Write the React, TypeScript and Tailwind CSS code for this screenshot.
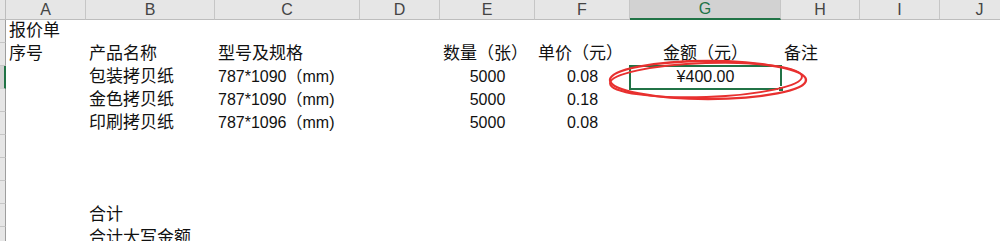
import React from "react"

const cols = [
  { l: "A", w: 80 },
  { l: "B", w: 129 },
  { l: "C", w: 145 },
  { l: "D", w: 80 },
  { l: "E", w: 95 },
  { l: "F", w: 95 },
  { l: "G", w: 151 },
  { l: "H", w: 79 },
  { l: "I", w: 80 },
  { l: "J", w: 80 },
]

type Cell = { t: string; align?: "left" | "center"; cjk?: boolean }

// row -> column index -> cell
const rows: Record<number, Cell>[] = [
  { 0: { t: "报价单", cjk: true } },
  {
    0: { t: "序号", cjk: true },
    1: { t: "产品名称", cjk: true },
    2: { t: "型号及规格", cjk: true },
    4: { t: "数量（张）", cjk: true },
    5: { t: "单价（元）", cjk: true },
    6: { t: "金额（元）", cjk: true, align: "center" },
    7: { t: "备注", cjk: true },
  },
  {
    1: { t: "包装拷贝纸", cjk: true },
    2: { t: "787*1090（mm)" },
    4: { t: "5000", align: "center" },
    5: { t: "0.08", align: "center" },
    6: { t: "¥400.00", align: "center" },
  },
  {
    1: { t: "金色拷贝纸", cjk: true },
    2: { t: "787*1090（mm)" },
    4: { t: "5000", align: "center" },
    5: { t: "0.18", align: "center" },
  },
  {
    1: { t: "印刷拷贝纸", cjk: true },
    2: { t: "787*1096（mm)" },
    4: { t: "5000", align: "center" },
    5: { t: "0.08", align: "center" },
  },
  {},
  {},
  {},
  { 1: { t: "合计", cjk: true } },
  { 1: { t: "合计大写金额", cjk: true } },
]

const SEL_ROW = 2
const SEL_COL = 6

export default function App() {
  return (
    <div className="relative h-[241px] w-[1000px] overflow-hidden bg-white font-['Liberation_Sans','Noto_Sans_CJK_SC',sans-serif] text-[#111]">
      {/* column headers */}
      <div className="flex h-[20px]">
        <div className="w-[6px] shrink-0 border-r border-b border-[#bdbdbd] bg-[#e6e6e6]" />
        {cols.map((c, i) => (
          <div
            key={c.l}
            style={{ width: c.w }}
            className={
              i === SEL_COL
                ? "flex shrink-0 items-center justify-center border-r border-[#c6c6c6] border-b-2 border-b-[#217346] bg-[#d2d2d2] text-[16px] leading-none text-[#217346]"
                : "flex shrink-0 items-center justify-center border-r border-[#c6c6c6] border-b border-b-[#bdbdbd] bg-[#e6e6e6] text-[16px] leading-none text-[#444]"
            }
          >
            {c.l}
          </div>
        ))}
      </div>

      {/* rows */}
      {rows.map((r, ri) => (
        <div key={ri} className="flex h-[23px]">
          <div
            className={
              ri === SEL_ROW
                ? "w-[6px] shrink-0 border-r-2 border-b border-r-[#217346] border-b-[#d0d0d0] bg-[#d2d2d2]"
                : "w-[6px] shrink-0 border-r border-b border-r-[#9e9e9e] border-b-[#c6c6c6] bg-[#e6e6e6]"
            }
          />
          {cols.map((c, ci) => {
            const cell = r[ci]
            const sel = ri === SEL_ROW && ci === SEL_COL
            return (
              <div
                key={c.l}
                style={{ width: c.w }}
                className={
                  "relative flex shrink-0 items-end pb-[2px] whitespace-nowrap " +
                  (cell?.align === "center" ? "justify-center" : "justify-start pl-[3px]")
                }
              >
                {cell && (
                  <span className={cell.cjk ? "text-[17px] leading-[20px]" : "text-[16px] leading-[20px]"}>
                    {cell.t}
                  </span>
                )}
                {sel && (
                  <>
                    <div className="absolute -top-[1px] -bottom-[1px] -left-[1px] -right-[1px] border-2 border-[#217346]" />
                    <div className="absolute -right-[3px] -bottom-[3px] h-[6px] w-[6px] border border-white bg-[#217346]" />
                  </>
                )}
              </div>
            )
          })}
        </div>
      ))}

      {/* red hand-drawn circle */}
      <svg
        className="pointer-events-none absolute left-[600px] top-[54px]"
        width="216"
        height="52"
        viewBox="0 0 216 52"
      >
        <ellipse cx="108" cy="26" rx="98" ry="19" fill="none" stroke="#e8302f" strokeWidth="2.4" />
        <ellipse
          cx="106"
          cy="26"
          rx="96"
          ry="17"
          fill="none"
          stroke="#e8302f"
          strokeWidth="2"
          transform="rotate(-2 106 26)"
        />
      </svg>
    </div>
  )
}
